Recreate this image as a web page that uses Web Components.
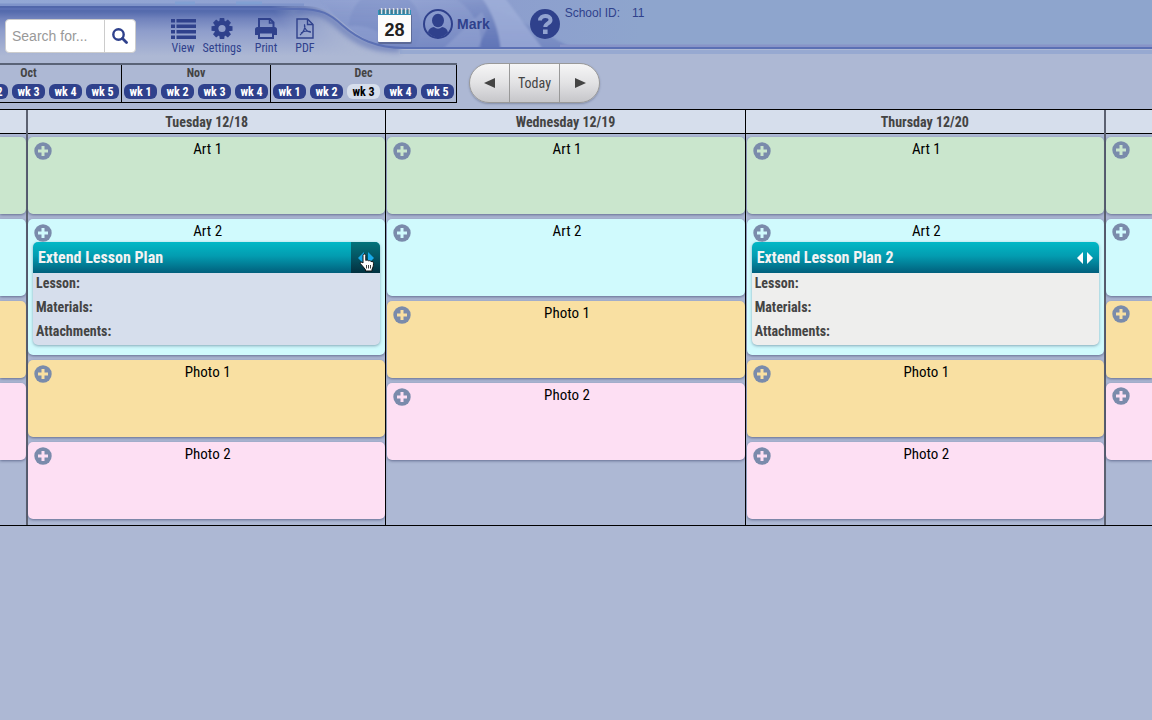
<!DOCTYPE html>
<html lang="en">
<head>
<meta charset="utf-8">
<title>Lesson planner</title>
<style>
  body {
    margin: 0;
    background: #adb8d4;
    color: #444;
    font-family: "Roboto Condensed", Roboto, sans-serif;
  }
</style>
</head>
<body>
<lp-app></lp-app>

<script>
const makeTemplate = (html) => {
  const template = document.createElement('template');
  template.innerHTML = html;
  return template;
};

const attach = (element, template) => {
  element.attachShadow({ mode: 'open' });
  element.shadowRoot.appendChild(template.content.cloneNode(true));
};

const months = [
  { name: 'Oct', weeks: 5 },
  { name: 'Nov', weeks: 4 },
  { name: 'Dec', weeks: 5, current: 3 },
];

const classes = [
  { name: 'Art 1', color: '#cae6cd' },
  { name: 'Art 2', color: '#d0fafd' },
  { name: 'Photo 1', color: '#f9e0a2' },
  { name: 'Photo 2', color: '#fddff3' },
];

const days = [
  { title: '', edge: 'left' },
  { title: 'Tuesday 12/18', lesson: 'Extend Lesson Plan', active: true },
  { title: 'Wednesday 12/19' },
  { title: 'Thursday 12/20', lesson: 'Extend Lesson Plan 2' },
  { title: '', edge: 'right' },
];

/* Banner artwork behind the toolbar */
const bannerTemplate = makeTemplate(`
<style>
:host {
  display: block;
  overflow: hidden;
}

svg {
  display: block;
  width: 4000px;
  height: 62px;
}
</style>
<svg viewBox="0 0 4000 62" aria-hidden="true">
  <defs>
    <linearGradient id="glow" x1="0" y1="0" x2="0" y2="1">
      <stop offset="0" stop-color="#5066aa"/>
      <stop offset=".12" stop-color="#566cae"/>
      <stop offset=".25" stop-color="#7082bc"/>
      <stop offset=".5" stop-color="#8e9dcb"/>
      <stop offset="1" stop-color="#adb8d4"/>
    </linearGradient>
    <linearGradient id="sky" gradientUnits="userSpaceOnUse" x1="0" y1="0" x2="640" y2="0">
      <stop offset="0" stop-color="#93a8d5"/>
      <stop offset=".5" stop-color="#8fa0d0"/>
      <stop offset=".6" stop-color="#95a5d3"/>
      <stop offset=".75" stop-color="#8c9dce"/>
      <stop offset="1" stop-color="#8ea5cd"/>
    </linearGradient>
    <linearGradient id="shade" x1="0" y1="0" x2="0" y2="1">
      <stop offset="0" stop-color="#6478b8" stop-opacity="0"/>
      <stop offset="1" stop-color="#6276b8" stop-opacity=".6"/>
    </linearGradient>
    <linearGradient id="arc" x1="0" y1="0" x2="0" y2="1">
      <stop offset="0" stop-color="#6378b8" stop-opacity=".15"/>
      <stop offset="1" stop-color="#566cb2" stop-opacity=".75"/>
    </linearGradient>
    <linearGradient id="ray" x1="0" y1="0" x2="0" y2="1">
      <stop offset="0" stop-color="#a0b0da" stop-opacity=".8"/>
      <stop offset="1" stop-color="#9dacd8" stop-opacity=".7"/>
    </linearGradient>
    <linearGradient id="fade" gradientUnits="userSpaceOnUse" x1="300" y1="50" x2="345" y2="20">
      <stop offset="0" stop-color="#fff"/>
      <stop offset="1" stop-color="#fff" stop-opacity="0"/>
    </linearGradient>
    <mask id="left"><rect width="400" height="62" fill="url(#fade)"/></mask>
    <filter id="soft" x="-5%" y="-40%" width="110%" height="180%"><feGaussianBlur stdDeviation="2.5"/></filter>
    <filter id="blend" x="-10%" y="-10%" width="120%" height="120%"><feGaussianBlur stdDeviation="1"/></filter>
    <clipPath id="above"><path d="M0 0H4000V48H405C375 48 358 36 342 22 328 10 320 6 304 6H0z"/></clipPath>
  </defs>
  <rect y="6" width="400" height="50" fill="url(#glow)" mask="url(#left)"/>
  <path d="M296 10C320 10 328 16 340 27 358 43 372 49 400 49" fill="none" stroke="#5b70b3" stroke-width="7" opacity=".6" filter="url(#soft)"/>
  <path d="M400 52H4000" stroke="#8fa4d0" stroke-width="4" opacity=".7"/>
  <g clip-path="url(#above)">
    <rect width="4000" height="50" fill="url(#sky)"/>
    <g filter="url(#blend)">
      <path d="M320 0C340 20 360 52 400 52H580L480 0z" fill="url(#shade)"/>
      <circle cx="385" cy="26" r="36" fill="#7083c0" opacity=".3"/>
      <path d="M340 28Q360 22 378 32L378 46 360 42z" fill="#93a4d4" opacity=".5"/>
      <path d="M462 -2H482Q500 20 501 52H480Q486 20 455 -2z" fill="url(#arc)"/>
      <path d="M482 -2H505L545 52H501Q498 20 482 -2z" fill="url(#ray)"/>
      <path d="M440 52L482 12 488 26 476 52z" fill="#a3b2da" opacity=".35"/>
    </g>
    <path d="M0 5H304" stroke="#7f94ca" stroke-width="3"/>
    <path d="M175 3H195M236 3H262" stroke="#7da0d4" stroke-width="3" opacity=".7"/>
    <path d="M560 46H4000" stroke="#8894c8" stroke-width="3"/>
  </g>
  <path d="M0 9H298C322 9 330 14 342 25 358 39 376 48 405 48H4000" fill="none" stroke="#5b70b4" stroke-width="2"/>
</svg>
`);

class LpBanner extends HTMLElement {
  constructor() {
    super();
    attach(this, bannerTemplate);
  }
}

const searchTemplate = makeTemplate(`
<style>
:host {
  display: block;
}

form {
  display: flex;
  box-sizing: border-box;
  height: 34px;
  border: 1px solid #ccc;
  border-radius: 4px;
  background: #fff;
  overflow: hidden;
}

input {
  box-sizing: border-box;
  width: 99px;
  padding: 0 6px;
  border: 0;
  border-right: 1px solid #ccc;
  background: none;
  outline: none;
  font: 14px "Liberation Sans", Arial, sans-serif;
  color: #444;
}

input::placeholder {
  color: #999;
}

button {
  display: flex;
  width: 30px;
  padding: 0;
  border: 0;
  align-items: center;
  justify-content: center;
  background: none;
}
</style>
<form>
  <input type="text" placeholder="Search for..." aria-label="Search for">
  <button type="button" aria-label="Search">
    <svg width="16" height="16" viewBox="0 0 16 16" fill="none" stroke="#2f418c">
      <circle cx="6.5" cy="6.5" r="5.2" stroke-width="2.4"/>
      <path d="M10.5 10.5L14.5 14.5" stroke-width="2.8" stroke-linecap="round"/>
    </svg>
  </button>
</form>
`);

class LpSearch extends HTMLElement {
  constructor() {
    super();
    attach(this, searchTemplate);
  }
}

const toolTemplate = makeTemplate(`
<style>
:host {
  display: block;
}

button {
  display: flex;
  flex-direction: column;
  align-items: center;
  width: 100%;
  padding: 0;
  border: 0;
  background: none;
  color: #2f418c;
  font: 12px "Roboto Condensed", Roboto, sans-serif;
  line-height: 16px;
}

::slotted(svg) {
  display: block;
  height: 22px;
}
</style>
<button type="button"><slot name="icon"></slot><slot></slot></button>
`);

class LpTool extends HTMLElement {
  constructor() {
    super();
    attach(this, toolTemplate);
  }
}

const headerTemplate = makeTemplate(`
<style>
:host {
  display: block;
  position: relative;
  height: 63px;
  color: #2f418c;
  font-family: "Liberation Sans", Arial, sans-serif;
}

lp-banner {
  position: absolute;
  inset: 0;
}

header {
  position: relative;
  display: flex;
  align-items: flex-start;
}

lp-search {
  margin: 19px 30px 0 5px;
}

nav {
  display: flex;
  margin-top: 18px;
}

lp-tool {
  width: 44px;
}

lp-tool.narrow {
  width: 34px;
}

.date {
  margin: 8px 10px 0 55px;
}

.date svg {
  display: block;
}

.user {
  display: flex;
  align-items: center;
  gap: 4px;
  margin: 9px 40px 0 0;
  color: inherit;
  font-size: 14px;
  font-weight: bold;
  text-decoration: none;
}

.help {
  margin: 9px 5px 0 0;
  padding: 0;
  border: 0;
  background: none;
}

.help svg {
  display: block;
}

.school {
  display: flex;
  gap: 12px;
  margin: 5px 0 0;
  font-size: 12px;
  line-height: 16px;
}
</style>
<lp-banner></lp-banner>
<header>
  <lp-search></lp-search>
  <nav>
    <lp-tool class="narrow">
      <svg slot="icon" width="25" height="22" viewBox="0 0 25 22" fill="#2f418c">
        <path d="M0 1h4v3.500H0zM5.500 1H25v3.500H5.500zM0 6.500h4V10H0zM5.500 6.500H25V10H5.500zM0 12h4v3.500H0zM5.500 12H25v3.500H5.500zM0 17.500h4V21H0zM5.500 17.500H25V21H5.500z"/>
      </svg>View
    </lp-tool>
    <lp-tool>
      <svg slot="icon" width="22" height="22" viewBox="0 0 22 22">
        <g fill="#2f418c">
          <circle cx="11" cy="10.500" r="7.800"/>
          <path d="M8.800 0h4.400l.6 4H8.200zM8.800 21h4.400l.6-4H8.200z"/>
          <path d="M8.800 0h4.400l.6 4H8.200zM8.800 21h4.400l.6-4H8.200z" transform="rotate(45 11 10.500)"/>
          <path d="M8.800 0h4.400l.6 4H8.200zM8.800 21h4.400l.6-4H8.200z" transform="rotate(90 11 10.500)"/>
          <path d="M8.800 0h4.400l.6 4H8.200zM8.800 21h4.400l.6-4H8.200z" transform="rotate(135 11 10.500)"/>
        </g>
        <circle cx="11" cy="10.500" r="3.600" fill="#8f9dca"/>
      </svg>Settings
    </lp-tool>
    <lp-tool>
      <svg slot="icon" width="24" height="22" viewBox="0 0 24 22">
        <path d="M5 10V1h11l3.500 3.500V10" fill="none" stroke="#2f418c" stroke-width="2"/>
        <path d="M15.500 1v4h4" fill="none" stroke="#2f418c" stroke-width="1.500"/>
        <path d="M3.500 9h17a2.500 2.500 0 0 1 2.500 2.500V17h-4v-3H5v3H1v-5.500A2.500 2.500 0 0 1 3.500 9z" fill="#2f418c"/>
        <path d="M5 14.500h14V20H5z" fill="none" stroke="#2f418c" stroke-width="2"/>
      </svg>Print
    </lp-tool>
    <lp-tool class="narrow">
      <svg slot="icon" width="18" height="22" viewBox="0 0 18 22" fill="none" stroke="#2f418c" stroke-width="1.400">
        <path d="M1 1h10.500L17 6.500V20H1z"/>
        <path d="M11.500 1v5.500H17"/>
        <path d="M8.500 6.500c1.500 3-1.500 8.500-4.500 10.500M8.500 6.500c-.8 3 2.500 8 6.500 7.500M5 15c3-2 6-2.500 9.500-1.500" stroke-width="1.200"/>
      </svg>PDF
    </lp-tool>
  </nav>
  <div class="date">
    <svg width="36" height="36" viewBox="0 0 36 36">
      <rect x="1" y="6" width="34" height="30" rx="2" fill="#3f4a6b" opacity=".5"/>
      <rect x="1" y="4" width="33" height="30" rx="1" fill="#fcfcfc"/>
      <rect x="1" y="2" width="33" height="5" fill="#2f93b8"/>
      <path d="M4.500 0v6M8.500 0v6M12.500 0v6M16.500 0v6M20.500 0v6M24.500 0v6M28.500 0v6M32 0v6" stroke="#dfe3e6" stroke-width="1.500"/>
      <path d="M3 1v5M7 1v5M11 1v5M15 1v5M19 1v5M23 1v5M27 1v5M31 1v5" stroke="#4c6470"/>
      <text x="17.500" y="28" text-anchor="middle" font-family="Liberation Sans, Arial, sans-serif" font-size="18" font-weight="bold" fill="#222">28</text>
    </svg>
  </div>
  <a class="user" href="#">
    <svg width="30" height="30" viewBox="0 0 30 30">
      <circle cx="15" cy="15" r="14" fill="none" stroke="#2f418c" stroke-width="2"/>
      <path d="M5 23.500c.8-4 3.200-4.900 6-5.500 2.400 2.200 5.600 2.200 8 0 2.800.6 5.200 1.500 6 5.500A13 13 0 0 1 5 23.500z" fill="#2f418c"/>
      <ellipse cx="15" cy="11.500" rx="6" ry="6.800" fill="#2f418c"/>
    </svg>
    Mark
  </a>
  <button class="help" type="button" aria-label="Help">
    <svg width="30" height="30" viewBox="0 0 30 30">
      <circle cx="15" cy="15" r="15" fill="#2f418c"/>
      <path d="M10 11.500c0-6 10.500-5.800 10.500-.6 0 3.600-5.200 3.300-5.200 7.100" fill="none" stroke="#92a3d0" stroke-width="4"/>
      <path d="M13 20.500h4.600V25H13z" fill="#92a3d0"/>
    </svg>
  </button>
  <p class="school"><span>School ID:</span><span>11</span></p>
</header>
`);

class LpHeader extends HTMLElement {
  constructor() {
    super();
    attach(this, headerTemplate);
  }
}

const monthTemplate = makeTemplate(`
<style>
:host {
  display: flex;
  flex-direction: column;
  gap: 3px;
  padding: 0 2px 3px;
  border-right: 1px solid #000;
}

.name {
  font-size: 12px;
  font-weight: bold;
  line-height: 16px;
  text-align: center;
}

.weeks {
  display: flex;
  gap: 4px;
}

button {
  width: 33px;
  height: 15px;
  padding: 0;
  border: 0;
  border-radius: 6px;
  background: #2f418c;
  color: #fff;
  font: bold 12px "Roboto Condensed", Roboto, sans-serif;
  line-height: 16px;
  white-space: nowrap;
}

button.current {
  background: #d6deec;
  color: #000;
}
</style>
<div class="name"></div>
<div class="weeks"></div>
`);

class LpMonth extends HTMLElement {
  constructor() {
    super();
    attach(this, monthTemplate);
  }

  set data(month) {
    this.shadowRoot.querySelector('.name').textContent = month.name;

    const weeks = this.shadowRoot.querySelector('.weeks');
    for (let i = 1; i <= month.weeks; i += 1) {
      const button = document.createElement('button');
      button.type = 'button';
      button.textContent = `wk ${i}`;
      button.classList.toggle('current', i === month.current);
      weeks.appendChild(button);
    }
  }
}

const navTemplate = makeTemplate(`
<style>
:host {
  display: flex;
  align-items: flex-start;
  gap: 12px;
  height: 46px;
  overflow: hidden;
}

/* scrolled so that the end of the year is in view */
.months {
  display: flex;
  margin-left: -64px;
  border-top: 2px solid #5a6377;
  border-bottom: 1px solid #000;
}

.pager {
  display: flex;
  box-sizing: border-box;
  height: 40px;
  border: 1px solid #999;
  border-radius: 20px;
  background: linear-gradient(#f6f6f6, #e2e2e4 50%, #c6c6ca);
  box-shadow: 0 1px 2px rgba(70, 80, 110, .4);
  overflow: hidden;
}

.pager button {
  width: 39px;
  padding: 0;
  border: 0;
  background: none;
  color: #444;
  font: 14px "Roboto Condensed", Roboto, sans-serif;
}

.pager .today {
  width: 51px;
  border: solid #999;
  border-width: 0 1px;
}

.pager svg {
  display: block;
  margin: auto;
}
</style>
<div class="months"></div>
<div class="pager">
  <button type="button" aria-label="Previous week">
    <svg width="12" height="10" viewBox="0 0 12 10"><path d="M0 5L11 0V10z" fill="#444"/></svg>
  </button>
  <button type="button" class="today">Today</button>
  <button type="button" aria-label="Next week">
    <svg width="12" height="10" viewBox="0 0 12 10"><path d="M12 5L1 0V10z" fill="#444"/></svg>
  </button>
</div>
`);

class LpWeekNav extends HTMLElement {
  constructor() {
    super();
    attach(this, navTemplate);
  }

  connectedCallback() {
    const container = this.shadowRoot.querySelector('.months');
    months.forEach((month) => {
      const element = document.createElement('lp-month');
      element.data = month;
      container.appendChild(element);
    });
  }
}

const lessonTemplate = makeTemplate(`
<style>
:host {
  display: block;
  margin: 0 5px;
  border-radius: 5px;
  background: #eeeeed;
  box-shadow: 0 1px 3px rgba(60, 90, 120, .5);
}

:host([active]) {
  background: #d6deec;
}

.head {
  display: flex;
  height: 31px;
  border-radius: 5px 5px 0 0;
  background: linear-gradient(#02b8c6, #039cb0 45%, #015f7c);
  overflow: hidden;
}

h3 {
  flex: 1;
  margin: 0;
  padding-left: 5px;
  color: #f3f3f3;
  font-size: 16px;
  line-height: 31px;
}

.extend {
  position: relative;
  display: flex;
  width: 29px;
  padding: 0;
  border: 0;
  align-items: center;
  justify-content: center;
  background: none;
  color: #fff;
}

:host([active]) .extend {
  background: linear-gradient(#03737b, #045462 50%, #03303f);
  color: #16a9e8;
}

/* pointer resting on the extend button */
.pointer {
  position: absolute;
  left: 8px;
  top: 11px;
  display: none;
}

:host([active]) .pointer {
  display: block;
}

.rows {
  display: flex;
  flex-direction: column;
  padding: 0 3px 3px;
  gap: 3px;
  font-size: 14px;
  font-weight: bold;
  line-height: 21px;
}
</style>
<div class="head">
  <h3><slot></slot></h3>
  <button class="extend" type="button" aria-label="Extend lesson">
    <svg width="18" height="12" viewBox="0 0 18 12"><path d="M7 0V12L1 6zM11 0V12L17 6z" fill="currentColor"/></svg>
    <svg class="pointer" width="16" height="19" viewBox="0 0 16 19">
      <path d="M4 2.500C4 .6 6.800.6 6.800 2.500V7.500C8 6.800 9.200 7 9.600 8c1-.7 2.200-.4 2.500.6 1.300-.5 2.400.2 2.400 1.700 0 3-.6 4.200-1.500 6V18H6.500v-1.300C5 14.500 3 12.500 1.500 10.800.6 9.500 2.200 8.300 4 10z" fill="#fff" stroke="#111"/>
      <path d="M7.500 12v3.500M9.500 12v3.500M11.500 12v3.500" stroke="#111" stroke-width=".8"/>
    </svg>
  </button>
</div>
<div class="rows">
  <div>Lesson:</div>
  <div>Materials:</div>
  <div>Attachments:</div>
</div>
`);

class LpLesson extends HTMLElement {
  constructor() {
    super();
    attach(this, lessonTemplate);
  }
}

const classTemplate = makeTemplate(`
<style>
:host {
  display: block;
  box-sizing: border-box;
  min-height: 77px;
  border-radius: 5px;
  background: var(--class-color);
  box-shadow: 0 1px 3px rgba(50, 60, 100, .6);
}

.title {
  display: grid;
  grid-template-columns: 30px 1fr 28px;
  align-items: center;
  height: 23px;
  color: #000;
  font-size: 15px;
  line-height: 24px;
  text-align: center;
}

button {
  margin: 3px 0 0 6px;
  padding: 0;
  border: 0;
  background: none;
}

svg {
  display: block;
}

::slotted(lp-lesson) {
  margin-bottom: 10px;
}
</style>
<div class="title">
  <button type="button" aria-label="Add lesson">
    <svg width="18" height="18" viewBox="0 0 18 18">
      <circle cx="9" cy="9" r="8.700" fill="#7a8bab"/>
      <path d="M9 4v10M4 9h10" stroke="var(--class-color)" stroke-width="3"/>
    </svg>
  </button>
  <span></span>
</div>
<slot></slot>
`);

class LpClass extends HTMLElement {
  constructor() {
    super();
    attach(this, classTemplate);
  }

  set data({ name, color, edge }) {
    this.style.setProperty('--class-color', color);

    if (edge) {
      this.shadowRoot.querySelector('span').remove();
    } else {
      this.shadowRoot.querySelector('span').textContent = name;
    }

    if (edge === 'left') {
      this.shadowRoot.querySelector('button').remove();
    }
  }
}

const dayTemplate = makeTemplate(`
<style>
:host {
  display: flex;
  flex-direction: column;
  min-width: 0;
  border-left: 1px solid #000;
}

h2 {
  box-sizing: border-box;
  height: 24px;
  margin: 0;
  border-bottom: 1px solid #000;
  background: #d6deec;
  font-size: 14px;
  line-height: 24px;
  text-align: center;
}

.classes {
  display: flex;
  flex-direction: column;
  gap: 5px;
  padding: 3px 0 6px 1px;
}

:host([edge="left"]) {
  border-left: 0;
}

:host([edge="left"]) + :host,
:host([edge="right"]),
:host([first]) {
  border-left: 2px solid #5c6170;
}

:host([edge]) .classes,
:host([first]) .classes {
  padding-left: 0;
}

:host([edge="left"]) lp-class {
  border-radius: 0 5px 5px 0;
}

:host([edge="right"]) lp-class {
  border-radius: 5px 0 0 5px;
}
</style>
<h2></h2>
<div class="classes"></div>
`);

class LpDay extends HTMLElement {
  constructor() {
    super();
    attach(this, dayTemplate);
  }

  set data(day) {
    if (day.edge) {
      this.setAttribute('edge', day.edge);
    }

    this.shadowRoot.querySelector('h2').textContent = day.title;

    const list = this.shadowRoot.querySelector('.classes');
    classes.forEach((item) => {
      const element = document.createElement('lp-class');
      element.data = { ...item, edge: day.edge };

      if (day.lesson && item.name === 'Art 2') {
        const lesson = document.createElement('lp-lesson');
        lesson.textContent = day.lesson;
        lesson.toggleAttribute('active', Boolean(day.active));
        element.appendChild(lesson);
      }

      list.appendChild(element);
    });
  }
}

const boardTemplate = makeTemplate(`
<style>
:host {
  display: grid;
  grid-template-columns: 26px repeat(3, 1fr) 48px;
  border: solid #000;
  border-width: 1px 0;
  overflow: hidden;
}
</style>
`);

class LpBoard extends HTMLElement {
  constructor() {
    super();
    attach(this, boardTemplate);
  }

  connectedCallback() {
    days.forEach((day, index) => {
      const element = document.createElement('lp-day');
      element.data = day;
      element.toggleAttribute('first', index === 1);
      this.shadowRoot.appendChild(element);
    });
  }
}

const appTemplate = makeTemplate(`
<style>
:host {
  display: block;
}
</style>
<lp-header></lp-header>
<lp-week-nav></lp-week-nav>
<lp-board></lp-board>
`);

class LpApp extends HTMLElement {
  constructor() {
    super();
    attach(this, appTemplate);
  }
}

window.customElements.define('lp-banner', LpBanner);
window.customElements.define('lp-search', LpSearch);
window.customElements.define('lp-tool', LpTool);
window.customElements.define('lp-header', LpHeader);
window.customElements.define('lp-month', LpMonth);
window.customElements.define('lp-week-nav', LpWeekNav);
window.customElements.define('lp-lesson', LpLesson);
window.customElements.define('lp-class', LpClass);
window.customElements.define('lp-day', LpDay);
window.customElements.define('lp-board', LpBoard);
window.customElements.define('lp-app', LpApp);
</script>
</body>
</html>
